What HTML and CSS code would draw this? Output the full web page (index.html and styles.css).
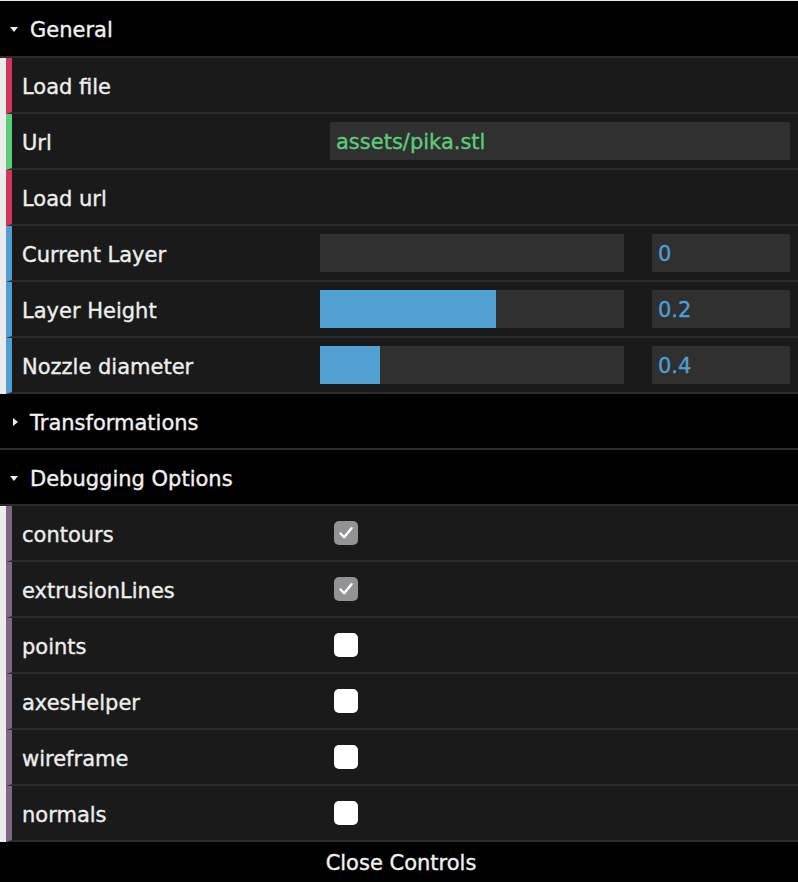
FILE: index.html
```html
<!DOCTYPE html>
<html>
<head>
<meta charset="utf-8">
<link rel="stylesheet" href="styles.css">
</head>
<body>
<div class="gui">
  <div class="folder">
    <div class="title first"><span class="tri down"></span><span class="ttext">General</span></div>
    <ul class="children">
      <li class="row fn"><span class="label">Load file</span></li>
      <li class="row str"><span class="label">Url</span><div class="ctrl"><div class="text-input">assets/pika.stl</div></div></li>
      <li class="row fn"><span class="label">Load url</span></li>
      <li class="row num"><span class="label">Current Layer</span><div class="ctrl slider-ctrl"><div class="slider"><div class="fg" style="width:0%"></div></div><div class="num-input">0</div></div></li>
      <li class="row num"><span class="label">Layer Height</span><div class="ctrl slider-ctrl"><div class="slider"><div class="fg" style="width:57.9%"></div></div><div class="num-input">0.2</div></div></li>
      <li class="row num"><span class="label">Nozzle diameter</span><div class="ctrl slider-ctrl"><div class="slider"><div class="fg" style="width:19.7%"></div></div><div class="num-input">0.4</div></div></li>
    </ul>
  </div>
  <div class="folder">
    <div class="title"><span class="tri right"></span><span class="ttext">Transformations</span></div>
  </div>
  <div class="folder">
    <div class="title"><span class="tri down"></span><span class="ttext">Debugging Options</span></div>
    <ul class="children">
      <li class="row bool"><span class="label">contours</span><div class="ctrl"><span class="cb checked"><svg viewBox="0 0 24 24" width="24" height="24"><path d="M6.5 12.5 L10.2 16.3 L17.5 7.2" fill="none" stroke="#fff" stroke-width="2.4" stroke-linecap="round" stroke-linejoin="round"/></svg></span></div></li>
      <li class="row bool"><span class="label">extrusionLines</span><div class="ctrl"><span class="cb checked"><svg viewBox="0 0 24 24" width="24" height="24"><path d="M6.5 12.5 L10.2 16.3 L17.5 7.2" fill="none" stroke="#fff" stroke-width="2.4" stroke-linecap="round" stroke-linejoin="round"/></svg></span></div></li>
      <li class="row bool"><span class="label">points</span><div class="ctrl"><span class="cb"></span></div></li>
      <li class="row bool"><span class="label">axesHelper</span><div class="ctrl"><span class="cb"></span></div></li>
      <li class="row bool"><span class="label">wireframe</span><div class="ctrl"><span class="cb"></span></div></li>
      <li class="row bool"><span class="label">normals</span><div class="ctrl"><span class="cb"></span></div></li>
    </ul>
  </div>
  <div class="close"><span class="ctext">Close Controls</span></div>
</div>
</body>
</html>
```
FILE: styles.css
```css
html, body {
  margin: 0;
  padding: 0;
  background: #ececec;
}
body {
  padding-top: 1px;
  font-family: "DejaVu Sans", "Liberation Sans", sans-serif;
  font-size: 21px;
  color: #eee;
  -webkit-text-stroke: 0.35px currentColor;
}
.gui {
  width: 798px;
}
.title {
  height: 54px;
  background: #000;
  border-bottom: 2px solid #2c2c2c;
  display: flex;
  align-items: center;
  color: #f2f2f2;
  padding-left: 30px;
  position: relative;
}
.title.first {
  height: 55px;
}
.ttext {
  padding-top: 3px;
}
.tri {
  position: absolute;
  width: 0;
  height: 0;
}
.tri.down {
  left: 10px;
  top: 26px;
  border-left: 4px solid transparent;
  border-right: 4px solid transparent;
  border-top: 5px solid #eee;
}
.tri.right {
  left: 13px;
  top: 24px;
  border-top: 4px solid transparent;
  border-bottom: 4px solid transparent;
  border-left: 5px solid #eee;
}
.children {
  list-style: none;
  margin: 0 0 0 6px;
  padding: 0;
}
.row {
  height: 54px;
  background: #1a1a1a;
  border-bottom: 2px solid #2c2c2c;
  border-left: 6px solid #888;
  display: flex;
  align-items: center;
  padding-left: 10px;
}
.row.fn { border-left-color: #d5345f; }
.row.str { border-left-color: #5bcc7a; }
.row.num { border-left-color: #4f9fd3; }
.row.bool { border-left-color: #7e6686; }
.label {
  width: 298px;
  flex: none;
  white-space: nowrap;
  padding-top: 3px;
}
.ctrl {
  flex: 1;
  display: flex;
  align-items: center;
  padding-right: 8px;
}
.text-input {
  margin-left: 10px;
  flex: 1;
  height: 38px;
  line-height: 40px;
  background: #303030;
  color: #5bcc7a;
  padding-left: 6px;
}
.slider-ctrl {
  gap: 28px;
}
.slider {
  width: 304px;
  height: 38px;
  background: #303030;
  flex: none;
}
.fg {
  height: 100%;
  background: #52a1d3;
}
.num-input {
  flex: 1;
  height: 38px;
  line-height: 40px;
  background: #303030;
  color: #4f9fd6;
  padding-left: 6px;
}
.cb {
  margin-left: 14px;
  width: 24px;
  height: 24px;
  border-radius: 5px;
  background: #fff;
  display: block;
}
.cb.checked {
  background: #939396;
}
.cb svg {
  display: block;
}
.close {
  height: 40px;
  background: #000;
  color: #f2f2f2;
  display: flex;
  align-items: center;
  justify-content: center;
}
.ctext {
  padding-top: 2px;
  padding-left: 4px;
}
```
